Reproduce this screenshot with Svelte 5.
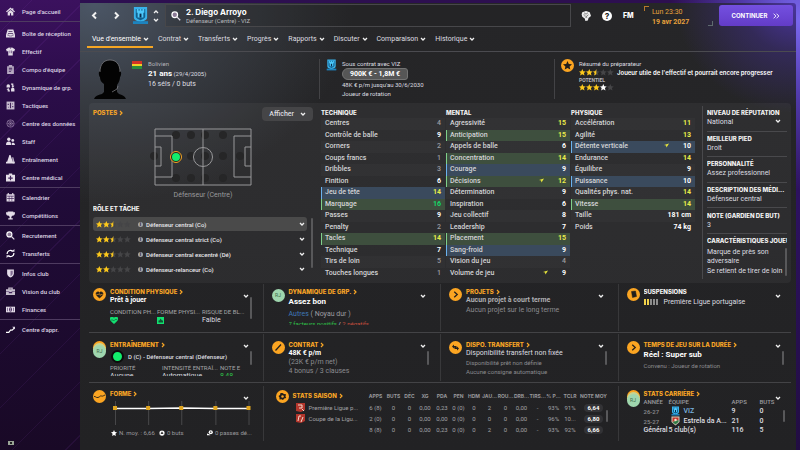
<script>
  const nav = [
    [['home', "Page d'accueil"]],
    [
      ['inbox', 'Boîte de réception'],
      ['shirt', 'Effectif'],
      ['clip', "Compo d'équipe"],
      ['dyn', 'Dynamique de grp.'],
      ['tact', 'Tactiques'],
      ['data', 'Centre des données'],
      ['staff', 'Staff'],
      ['cones', 'Entraînement'],
      ['med', 'Centre médical']
    ],
    [['cal', 'Calendrier'], ['cup', 'Compétitions']],
    [['search', 'Recrutement'], ['swap', 'Transferts']],
    [['shield', 'Infos club'], ['case', 'Vision du club'], ['cash', 'Finances']],
    [['growth', "Centre d'appr."]]
  ];
  const tabs = ["Vue d'ensemble", 'Contrat', 'Transferts', 'Progrès', 'Rapports', 'Discuter', 'Comparaison', 'Historique'];
  const roles = [
    [2.5, 'Défenseur central (Co)'],
    [2.5, 'Défenseur central strict (Co)'],
    [2.5, 'Défenseur central excentré (Dé)'],
    [2, 'Défenseur-relanceur (Co)']
  ];
  // [name, value, highlight, rising]
  const attributes = [
    ['TECHNIQUE', [
      ['Centres', 4], ['Contrôle de balle', 9], ['Corners', 2], ['Coups francs', 1], ['Dribbles', 3],
      ['Finition', 6], ['Jeu de tête', 14, 'blue'], ['Marquage', 16, 'green'], ['Passes', 9], ['Penalty', 2],
      ['Tacles', 14, 'green'], ['Technique', 7], ['Tirs de loin', 5], ['Touches longues', 1]
    ]],
    ['MENTAL', [
      ['Agressivité', 15], ['Anticipation', 15, 'green'], ['Appels de balle', 6], ['Concentration', 14, 'green'],
      ['Courage', 9, 'blue'], ['Décisions', 12, 'green', true], ['Détermination', 9], ['Inspiration', 6],
      ['Jeu collectif', 8], ['Leadership', 7], ['Placement', 15, 'green'], ['Sang-froid', 9, 'blue'],
      ['Vision du jeu', 4], ['Volume de jeu', 9, '', true]
    ]],
    ['PHYSIQUE', [
      ['Accélération', 11], ['Agilité', 13], ['Détente verticale', 10, 'blue', true], ['Endurance', 14],
      ['Équilibre', 9], ['Puissance', 10, 'blue'], ['Qualités phys. nat.', 14], ['Vitesse', 14, 'green'],
      ['Taille', '181 cm'], ['Poids', '74 kg']
    ]]
  ];
  const facts = [
    ['NIVEAU DE RÉPUTATION', 'National'],
    ['MEILLEUR PIED', 'Droit'],
    ['PERSONNALITÉ', 'Assez professionnel'],
    ['DESCRIPTION DES MÉDI...', 'Défenseur central'],
    ['NOTE (GARDIEN DE BUT)', '3']
  ];
  const seasonHead = ['APPS', 'BUTS', 'DÉC', 'XG', 'PDA', 'PEN', 'HDM', 'JAU...', 'ROU...', 'DRB...', 'TIRS...', '% P...', 'TCLR', 'NOTE MOY'];
  const seasonWidths = [18, 18, 14, 17, 17, 16, 15, 16, 16, 16, 16, 16, 17, 30];
  const season = [
    ['Première Ligue p...', '6 (8)', '0', '0', '0,00', '0,23', '0 (0)', '0', '2', '0', '0,00', '-', '93%', '91%', '6,64'],
    ['Coupe de la Ligu...', '2 (0)', '0', '0', '0,00', '0,00', '0 (0)', '0', '0', '0', '0,00', '-', '96%', '10...', '6,80'],
    ['', '8 (8)', '0', '0', '0,00', '0,23', '0 (0)', '0', '2', '0', '0,00', '-', '93%', '92%', '6,66']
  ];
  const dots = [[22, 7], [37, 7], [51, 7], [69, 7], [0, 28], [37, 28], [51, 28], [69, 28], [86, 28], [22, 50], [37, 50], [51, 50], [69, 50]];

  function level(v) {
    if (typeof v === 'string') return 'mid';
    if (v >= 16) return 'top';
    if (v >= 11) return 'high';
    return v >= 6 ? 'mid' : 'low';
  }
</script>

{#snippet chev(dir = 'down')}
  <svg class="chev {dir}" viewBox="0 0 6 6" aria-hidden="true"><path d="M1 2l2 2 2-2" /></svg>
{/snippet}

{#snippet stars(full, white = 0)}
  <svg class="stars" viewBox="0 0 35 7" role="img" aria-label="{full + white} étoiles sur 5">
    {#each [0, 1, 2, 3, 4] as i}
      <g transform="translate({i * 7} 0)">
        <path
          fill={i + 1 <= full ? '#fcc81c' : i + 1 <= full + white ? '#fff' : '#454547'}
          d="M3.3 0l1 2.3 2.4.2-1.8 1.6.6 2.5-2.2-1.3-2.2 1.3.6-2.5L0 2.500 2.300 2.300z" />
        {#if full > i && full < i + 1}
          <path fill="#fcc81c" d="M3.300 0v5.300L1.100 6.600l.6-2.500L0 2.500 2.300 2.300z" />
        {/if}
      </g>
    {/each}
  </svg>
{/snippet}

{#snippet crest()}
  <svg class="crest" viewBox="0 0 18 20" aria-hidden="true">
    <path fill="#39b2ea" d="M2 1h14v11c0 3-4 4-7 5-3-1-7-2-7-5z" />
    <path fill="#12618f" d="M4 3h10v8c0 2-3 3-5 4-2-1-5-2-5-4z" />
    <path fill="#4cc8fa" d="M5 3h2v2h1V3h2v2h1V3h2v4h-1v5H6V7H5z" />
    <path fill="#0c2d4c" d="M8 8h2v4H8z" />
    <path fill="#1d83be" d="M1 16h16v3H1z" />
  </svg>
{/snippet}

{#snippet icon(name)}
  <svg class="ico" viewBox="0 0 16 16" aria-hidden="true">
    {#if name === 'home'}
      <path d="M8 1L0 8l1.500 1.500L8 4l6.500 5.500L16 8l-3-2.600V2h-2v1.600zM3 9.500V15h4v-4h2v4h4V9.500L8 5.500z" />
    {:else if name === 'inbox'}
      <path d="M3 1h10l3 9v5H0v-5z" /><path class="cut" d="M4.500 4h7v1.500h-7zM3.500 7h9v1.500h-9zM2 10h3l1 2h4l1-2h3v1h-2.400l-1 2H5.400l-1-2H2z" />
    {:else if name === 'shirt'}
      <path d="M5 1h6l5 3-1.500 4L12 7v8H4V7L1.500 8 0 4z" /><path class="cut" d="M6 1h4L8 3zM6.500 6h1v5h-1zM9 6h1v5H9z" />
    {:else if name === 'clip'}
      <path opacity=".75" d="M2 2h3V0h6v2h3v14H2z" /><path class="cut" d="M5 5h6v1.500H5zM5 8h6v1.500H5zM5 11h4v1.500H5z" />
    {:else if name === 'dyn'}
      <path d="M1 5a3 3 0 016 0v3H1zM9 11a3 3 0 016 0v4H9zM9 1h4v4h2l-3 3.500L9.500 5H11V3H9zM7 15H3v-3H1l3-3 2.500 3H5v1h2z" />
    {:else if name === 'tact'}
      <path opacity=".85" d="M1 1h14v14H1z" /><path class="cut" d="M7 3h2v10H7zM3 5h2v2H3zM11 9h2v2h-2zM4 10h1v2H4zM11 4h1v2h-1z" />
    {:else if name === 'data'}
      <g fill="none" stroke="#b49fc0"><circle cx="8" cy="8" r="6.500" /><circle cx="8" cy="8" r="3.500" stroke-dasharray="2 1" /><path d="M2 8h12M8 2v12M4 4l8 8M12 4l-8 8" stroke-width=".6" /></g>
    {:else if name === 'staff'}
      <circle cx="5" cy="4" r="3" /><circle cx="12" cy="6" r="2.500" /><path d="M0 14c0-5 2-6 5-6s4 2 4 6zM10 14c0-3 0-4 2-4s4 1 4 4z" />
    {:else if name === 'cones'}
      <path d="M6 0h2l4 12h2v3H0v-3h2z" /><path opacity=".8" d="M11 4h2l2 8h1v3h-4z" />
    {:else if name === 'med'}
      <path d="M5 3V1h6v2h5v12H0V3z" /><path class="cut" d="M7 5h2v3h3v2H9v3H7v-3H4V8h3z" />
    {:else if name === 'cal'}
      <path d="M1 2h2V0h2v2h6V0h2v2h2v13H1z" /><path class="cut" d="M2 5h12v1H2zM5 6h1v8H5zM10 6h1v8h-1zM2 9.500h12v1H2z" />
    {:else if name === 'cup'}
      <path d="M3 1h10v1h3c0 4-1 6-4 6l-2.500 2v3H12v2H4v-2h2.500v-3L4 8C1 8 0 6 0 2h3z" />
    {:else if name === 'search'}
      <circle cx="6" cy="6" r="4.500" fill="#8b7a96" stroke="#fff" stroke-width="2" /><path d="M9 10.500L10.500 9l5 5-1.500 1.500z" />
    {:else if name === 'swap'}
      <path fill="none" stroke="#fff" stroke-width="2.200" d="M2 9a6 6 0 0110-5M14 7a6 6 0 01-10 5" /><path d="M9 5h6V0zM7 11H1v5z" />
    {:else if name === 'shield'}
      <path d="M2 1h12v7c0 4-3 6-6 7-3-1-6-3-6-7z" /><path class="cut" d="M8 3h4v5c0 2-2 4-4 5z" opacity=".6" />
    {:else if name === 'case'}
      <path opacity=".85" d="M4 4V1h8v3h4v10H0V4zm2 0h4V3H6z" fill-rule="evenodd" /><path class="cut" d="M0 8h6v1h4V8h6v1h-5v2H5V9H0z" />
    {:else if name === 'cash'}
      <path d="M0 3h16v10H0z" /><ellipse class="cut" cx="8" cy="8" rx="2.500" ry="4" /><path class="cut" d="M2 5h1v6H2zM13 5h1v6h-1z" /><path d="M7.500 5h1v6h-1z" />
    {:else if name === 'growth'}
      <path fill="none" stroke="#fff" stroke-width="2" d="M0 13h5l3-4h3l4-4" /><path d="M11 3h5v5z" />
    {:else if name === 'ball'}
      <circle cx="8" cy="8" r="7" /><path class="dark" d="M8 5l3 2-1 3.500H6L5 7zM7 1h2v2H7zM1.500 9l2 .5L4 12zM14.500 9l-2 .5-.5 2.500z" />
    {:else if name === 'boot'}
      <circle cx="10" cy="6" r="5.500" /><path class="dark" d="M10 3.500l2 1.500-.7 2.500H8.700L8 5z" /><path d="M0 9l6 2 3 3H0z" />
    {:else if name === 'star'}
      <path d="M8 0l2.400 5.400 5.600.6-4.200 3.900L13 16l-5-3-5 3 1.200-6.100L0 6l5.600-.6z" />
    {/if}
  </svg>
{/snippet}

{#snippet badge(kind)}
  <svg class="badge" viewBox="0 0 26 26" aria-hidden="true">
    <circle cx="13" cy="13" r="13" fill="#fba522" />
    <g fill="#221f1c" stroke="#221f1c">
      {#if kind === 'heart'}
        <path d="M13 20C9 17 6 14 6 11a3.800 3.800 0 017-1.500A3.800 3.800 0 0120 11c0 3-3 6-7 9z" /><path d="M7 13h4l1.500-2 2 4 1-2H19" fill="none" stroke="#fba522" stroke-width="1.200" />
      {:else if kind === 'star'}
        <path stroke="none" d="M13 4l2.600 6 6.400.6-4.800 4.300L18.600 21 13 17.800 7.400 21l1.400-6.100L4 10.600l6.400-.6z" />
      {:else if kind === 'arrow'}
        <path d="M10.500 7.500l6 5.500-6 5.500" fill="none" stroke-width="2.500" />
      {:else if kind === 'pen'}
        <path d="M7 19l11-12" stroke-width="2.500" />
      {:else if kind === 'card'}
        <path d="M9 7l8-1 2 11-8 2z" />
      {:else if kind === 'swap'}
        <path d="M6 11l4-4v3h5v3h-5v2zM20 15l-4 4v-3h-5v-3h5v-2z" stroke="none" />
      {:else if kind === 'wave'}
        <path d="M2 13c3-1 4 3 8 2s4-4 7-3 4-1 7-2" fill="none" stroke-width="1.800" />
      {:else if kind === 'ball'}
        <path stroke="none" d="M13 6l3 2 4 .5-1 4.500 1.500 3-4 1-2.500 3-3-1.500-4 .5v-4L5 12l3-2 1-4z" /><circle cx="13" cy="13" r="2.500" fill="#fba522" stroke="none" />
      {/if}
    </g>
  </svg>
{/snippet}

{#snippet avatar(stacked)}
  <span class="avatar" class:stacked>RJ</span>
{/snippet}

{#snippet title(text)}
  <h2 class="title"><a href="#top">{text}<svg viewBox="0 0 4 6" aria-hidden="true"><path d="M1 1l2 2-2 2" /></svg></a></h2>
{/snippet}

{#snippet more()}
  <button class="more" aria-label="Afficher plus">{@render chev()}</button>
{/snippet}

<div class="app" id="top">
  <nav class="side" aria-label="Menu principal">
    {#each nav as group}
      <ul>
        {#each group as [name, label]}
          <li><a href="#top">{@render icon(name)}{label}</a></li>
        {/each}
      </ul>
    {/each}
    <button class="keyboard" aria-label="Raccourcis"><i></i></button>
  </nav>

  <main>
    <header>
      <button class="step" aria-label="Précédent">{@render chev('left')}</button>
      <button class="step" aria-label="Suivant">{@render chev('right')}</button>
      {@render crest()}
      <div class="updown">
        <button aria-label="Joueur précédent">{@render chev('up')}</button>
        <button aria-label="Joueur suivant">{@render chev()}</button>
      </div>
      <div class="search">
        {@render icon('search')}
        <div>
          <h1>2. Diego Arroyo</h1>
          <p>Défenseur (Centre) - VIZ</p>
        </div>
        <input type="search" aria-label="Rechercher" />
      </div>
      <button class="tool" aria-label="Conseils">
        <svg viewBox="0 0 16 16"><path fill="#eee" d="M2 2l6-2 6 2 2 6-4 3-1 4-4 1-1-4-4-3-1-4z" /><path fill="none" stroke="#444" d="M5 3l3 2 3-2M4 6l3 1M12 6L9 8v3M6 9l2 1" /></svg>
      </button>
      <button class="tool help" aria-label="Aide">?</button>
      <button class="tool fm">FM</button>
      <div class="date"><span>Lun 23:30</span><b>19 avr 2027</b></div>
      <button class="go">CONTINUER
        <svg viewBox="0 0 12 10" aria-hidden="true"><path d="M1 1l4 4-4 4M6 1l4 4-4 4" /></svg>
      </button>
    </header>

    <nav class="tabs" aria-label="Sections du joueur">
      {#each tabs as tab, i}
        <a href="#top" class:on={i === 0}>{tab}{@render chev()}</a>
      {/each}
    </nav>

    <section class="intro">
      <div class="who">
        <svg class="portrait" viewBox="0 0 32 40" aria-hidden="true">
          <path d="M0 40c1-3 4-4 8-5l2-2v-8c-3-2-4-4-4-7-1 0-2-6 0-6C6 5 10 1 16 1s10 4 10 11c2 0 1 6 0 6 0 3-1 5-3 8v7l2 2c3 1 6 2 7 5z" />
          <path class="rim" d="M6 13C6 5 10 1 16 1s10 4 10 12M24 27l-1 3-5 3" />
        </svg>
        <svg class="flag" viewBox="0 0 10 8" role="img" aria-label="Bolivie"><path fill="#d33327" d="M0 0h10v3H0z" /><path fill="#f0cf28" d="M0 3h10v2H0z" /><path fill="#2a8b3d" d="M0 5h10v3H0z" /></svg>
        <div>
          <p class="soft">Bolivien</p>
          <p class="age"><b>21 ans</b> (29/4/2005)</p>
          <p class="caps">16 séls / 0 buts</p>
        </div>
      </div>
      <div class="deal">
        {@render crest()}
        <div>
          <p>Sous contrat avec VIZ</p>
          <button class="value">900K € - 1,8M €</button>
          <p>48K € p/m jusqu'au 30/6/2030</p>
          <p>Joueur de rotation</p>
        </div>
      </div>
      <div class="report">
        {@render badge('star')}
        <div>
          <p>Résumé du préparateur</p>
          <p class="verdict">{@render stars(2.5)}<b>Joueur utile de l'effectif et pourrait encore progresser</b></p>
          <p class="tiny">POTENTIEL</p>
          {@render stars(3, 1)}
        </div>
      </div>
    </section>

    <section class="panel">
      <div class="positions">
        <div class="bar">{@render title('POSTES')}<button class="show" aria-haspopup="menu">Afficher {@render chev()}</button></div>
        <svg class="pitch" viewBox="0 0 98 58" role="img" aria-label="Position sur le terrain">
          {#each dots as [x, y]}<circle class="spot" cx={x} cy={y} r="4" />{/each}
          <path class="lines" d="M1 1h96v56H1zM49 1v56M1 8h17v41H1M1 19h6v19H1M97 8H80v41h17M97 19h-6v19h6" />
          <circle class="lines" cx="49" cy="29" r="9.500" />
          <circle cx="22" cy="29" r="5.500" fill="#222" stroke="#f5a623" />
          <circle cx="22" cy="29" r="4" fill="#12ee6c" />
        </svg>
        <p class="caption">Défenseur (Centre)</p>
        <h2 class="plain">RÔLE ET TÂCHE</h2>
        <div class="roles">
          <ul>
            {#each roles as [score, label], i}
              <li><button class:on={i === 0}>{@render stars(score)}<i class="info">i</i><span>{label}</span>{@render chev()}</button></li>
            {/each}
          </ul>
          <i class="thumb"></i>
        </div>
      </div>

      <div class="attrs">
        {#each attributes as [heading, rows]}
          <table>
            <thead><tr><th colspan="2">{heading}</th></tr></thead>
            <tbody>
              {#each rows as [name, value, tone, rising]}
                <tr class={tone}>
                  <td>{name}</td>
                  <td class="num {level(value)}">
                    {#if rising}<svg viewBox="0 0 10 10" role="img" aria-label="En hausse"><path d="M10 1L0 4l4 1 1 4z" /></svg>{/if}{value}
                  </td>
                </tr>
              {/each}
            </tbody>
          </table>
        {/each}
      </div>

      <aside>
        {#each facts as [label, value], i}
          <div class="fact">
            <h2 class="plain">{label}</h2>
            <p>{value}</p>
            {#if i === 0}{@render more()}{/if}
          </div>
        {/each}
        <div class="traits">
          <h2 class="plain">CARACTÉRISTIQUES JOUEUR</h2>
          <ul><li>Marque de près son adversaire</li><li>Se retient de tirer de loin</li></ul>
          <i class="thumb"></i>
        </div>
      </aside>
    </section>

    <section class="cards">
      <article>
        {@render badge('heart')}
        <div class="body">
          {@render title('CONDITION PHYSIQUE')}
          <p class="strong">Prêt à jouer</p>
          <dl class="trio">
            <div><dt>CONDITION PH...</dt><dd><svg viewBox="0 0 16 14" role="img" aria-label="Bonne"><path fill="#12e070" d="M8 14C3 10 0 7 0 4a4 4 0 018-1.500A4 4 0 0116 4c0 3-3 6-8 10z" /><path d="M2 6h4l1.500 2L10 5h4" fill="none" stroke="#174" stroke-width="1.500" /></svg></dd></div>
            <div><dt>FORME PHYSI...</dt><dd><svg viewBox="0 0 16 14" role="img" aria-label="Bonne"><path fill="#12e070" d="M0 0h14v14H0z" /><path fill="#153" d="M7 3l3 4h2v4H3V7h2z" /></svg></dd></div>
            <div><dt>RISQUE DE BL...</dt><dd>Faible</dd></div>
          </dl>
        </div>
        {@render more()}<i class="thumb"></i>
      </article>
      <article>
        {@render avatar(false)}
        <div class="body">
          {@render title('DYNAMIQUE DE GRP.')}
          <p class="big">Assez bon</p>
          <p class="group"><a href="#top">Autres</a> ( Noyau dur )</p>
          <p class="clipped"><a class="pos" href="#top">7 facteurs positifs</a> / <a class="neg" href="#top">2 négatifs</a></p>
        </div>
        {@render more()}
      </article>
      <article>
        {@render badge('arrow')}
        <div class="body">
          {@render title('PROJETS')}
          <p class="grey"><b>Aucun projet à court terme</b></p>
          <p class="dim wide">Aucun projet sur le long terme</p>
        </div>
        {@render more()}
      </article>
      <article>
        {@render badge('card')}
        <div class="body">
          <h2 class="plain">SUSPENSIONS</h2>
          <p class="ban"><svg viewBox="0 0 15 6" role="img" aria-label="2 cartons sur 5"><path fill="#f2d24a" d="M0 0h2v6H0zM3 0h2v6H3z" /><path fill="#8d8d8d" d="M6 0h2v6H6zM9 0h2v6H9zM12 0h2v6h-2z" /></svg>Première Ligue portugaise</p>
        </div>
        {@render more()}
      </article>
    </section>

    <section class="cards second">
      <article>
        {@render avatar(true)}
        <div class="body">
          {@render title('ENTRAÎNEMENT')}
          <p class="post"><i></i>D (C) - Défenseur central (Défenseur)</p>
          <dl class="trio low">
            <div><dt>PRIORITÉ</dt><dd>Aucune</dd></div>
            <div><dt>INTENSITÉ ENTRAÎ...</dt><dd>Automatique</dd></div>
            <div><dt>NOTE E</dt><dd class="pos">8,48</dd></div>
          </dl>
        </div>
        {@render more()}<i class="thumb"></i>
      </article>
      <article>
        {@render badge('pen')}
        <div class="body">
          {@render title('CONTRAT')}
          <p class="strong">48K € p/m</p>
          <p class="dim">(23K € p/m net)</p>
          <p class="dim">4 bonus / 3 clauses</p>
        </div>
        {@render more()}<i class="thumb"></i>
      </article>
      <article>
        {@render badge('swap')}
        <div class="body">
          {@render title('DISPO. TRANSFERT')}
          <p>Disponibilité transfert non fixée</p>
          <p class="dim small">Disponibilité prêt non définie</p>
          <p class="dim small">Aucune consigne automatique</p>
        </div>
        {@render more()}<i class="thumb"></i>
      </article>
      <article>
        {@render badge('arrow')}
        <div class="body">
          {@render title('TEMPS DE JEU SUR LA DURÉE')}
          <p class="big">Réel : Super sub</p>
          <p class="dim small wide">Convenu : Joueur de rotation</p>
        </div>
        {@render more()}<i class="thumb"></i>
      </article>
    </section>

    <section class="cards bottom">
      <article>
        {@render badge('wave')}
        <div class="body">
          {@render title('FORME')}
          <svg class="chart" viewBox="0 0 140 24" preserveAspectRatio="none" role="img" aria-label="Notes des cinq derniers matchs">
            <path stroke="#48484a" d="M5.500 0v24M38.500 0v24M71.500 0v24M105.500 0v24M138.500 0v24" />
            <path fill="none" stroke="#fff" stroke-width="1.500" d="M5 7.500h33l33-.5 34 .5h33" />
            <path fill="#e0a520" d="M3 5h4v4H3zM36 5h4v4h-4zM69 5h4v4h-4zM103 5h4v4h-4zM136 5h4v4h-4z" />
          </svg>
          <p class="legend"><span>{@render icon('star')}N. moy. : 6,66</span><span>{@render icon('ball')}0 buts</span><span>{@render icon('boot')}0 passes dé...</span></p>
        </div>
        {@render more()}
      </article>

      <article>
        {@render badge('ball')}
        <div class="body">
          <table class="season">
            <colgroup><col />{#each seasonWidths as w}<col style="width:{w}px" />{/each}</colgroup>
            <thead>
              <tr><th scope="col">{@render title('STATS SAISON')}</th>{#each seasonHead as h}<th scope="col">{h}</th>{/each}</tr>
            </thead>
            <tbody>
              {#each season as row, r}
                <tr>
                  {#each row as cell, c}
                    <td>
                      {#if c === 0 && cell}
                        <svg class="comp" viewBox="0 0 9 9" aria-hidden="true"><path fill="#b3362c" d="M0 0h9v7L5 9 0 8z" /><path fill="none" stroke="#f3d9cc" d={r ? 'M2 7l1-5h2M5 8l2-5' : 'M2 2h4v3H3M6 6l2 2'} /></svg>{cell}
                      {:else if c === 14}<span class="note">{cell}</span>
                      {:else}{cell}{/if}
                    </td>
                  {/each}
                </tr>
              {/each}
            </tbody>
          </table>
        </div>
        <i class="thumb"></i>
      </article>

      <article>
        {@render avatar(true)}
        <div class="body">
          {@render title('STATS CARRIÈRE')}
          <table class="career">
            <thead><tr><th>ANNÉE</th><th>ÉQUIPE</th><th>APPS</th><th>BUTS</th></tr></thead>
            <tbody>
              <tr><td class="dim">26-27</td><td><span>{@render crest()}<a href="#top">VIZ</a></span></td><td>9</td><td>0</td></tr>
              <tr><td class="dim">25-27</td><td><span>
                <svg class="crest" viewBox="0 0 18 20" aria-hidden="true"><path fill="#d9cdbb" d="M1 1h16v11l-8 7-8-7z" /><path fill="#c6352b" d="M3 3h12v5L3 12z" /><path fill="#2f7a45" d="M15 8v4l-6 5-6-5z" /><circle cx="9" cy="8" r="2.500" fill="#f3e9d0" /></svg>Estrela da A...</span></td><td>21</td><td>0</td></tr>
            </tbody>
            <tfoot><tr><td>Général</td><td>5 club(s)</td><td>116</td><td>5</td></tr></tfoot>
          </table>
        </div>
        {@render more()}<i class="thumb"></i>
      </article>
    </section>
  </main>
</div>

<style>
  :global(body) { background: #1b0a30; }
  .app {
    display: grid; grid-template-columns: 80px minmax(0, 1fr); min-height: 100vh;
    background:
      radial-gradient(ellipse 130px 170px at 100% 20px, #7a68f0 0, #5a45c0cc 45%, transparent 100%),
      linear-gradient(to bottom, #2d0f50 0, #2d1260 45%, #220d42 100%);
    color: #dedee0; font: 7px/9px Roboto, "Liberation Sans", sans-serif;
  }
  .app *, .app { box-sizing: border-box; }
  h1, h2, p, ul, dl, dd { margin: 0; padding: 0; list-style: none; }
  a { color: inherit; text-decoration: none; }
  i { font-style: normal; }
  button { margin: 0; padding: 0; border: 0; background: none; color: inherit; font: inherit; cursor: pointer; }
  svg { display: block; flex: none; }
  table { border-collapse: separate; border-spacing: 0; }
  th, td { padding: 0; text-align: left; }
  .chev { width: 6px; height: 6px; fill: none; stroke: #f0f0f0; stroke-width: 1.300; }
  .up { transform: rotate(180deg); }
  .left { transform: rotate(90deg); }
  .right { transform: rotate(-90deg); }
  .ico { width: 9px; height: 9px; fill: #e4dde8; }
  .cut { fill: #42255c; }
  .dark { fill: #222; }
  .stars { width: 35px; height: 7px; }
  .badge { width: 13px; height: 13px; }
  .thumb { position: absolute; right: 11px; top: 13px; width: 2px; height: 22px; border-radius: 1px; background: #58585a; }

  .side {
    display: flex; flex-direction: column; padding-top: 2px; color: #dcd4e4; font-size: 6px; font-weight: 500;
    background:
      repeating-linear-gradient(135deg, transparent 0 22px, #8a3fc01c 22px 23px, transparent 23px 38px),
      linear-gradient(to bottom, #3b115e 0, #2b0d49 90px, #200b38 200px, #190926 100%);
  }
  .side ul { padding-bottom: 1px; }
  .side ul + ul { border-top: 1px solid #4e3b60; }
  .side ul:nth-child(2) { padding-top: 2px; }
  .side li a { display: flex; align-items: center; gap: 7px; height: 18px; padding-left: 6px; white-space: nowrap; }
  .keyboard { margin: auto 0 6px 8px; width: 6px; height: 4px; background: #9aa596; }
  .keyboard i { display: block; width: 2px; height: 2px; margin: auto; background: #222; }

  main {
    margin: 3px 4px 0 0; padding-bottom: 8px; border-radius: 0 3px 0 0;
    background:
      radial-gradient(ellipse 120px 110px at 100% 0, #4b35a0 0, #3a2c70aa 45%, transparent 100%),
      radial-gradient(ellipse 260px 200px at 2% 0, #4b5666 0, #3d424acc 45%, transparent 100%),
      linear-gradient(to bottom, #262628, #222224);
  }
  header { display: flex; align-items: center; height: 25px; padding: 0 3px 0 8px; }
  header > .step { width: 12px; margin-right: 10px; display: flex; justify-content: center; }
  .step .chev { width: 9px; height: 9px; }
  header > .crest { width: 17px; height: 19px; margin: 0 4px 0 0; }
  .updown { display: grid; gap: 2px; margin-right: 6px; }
  .search { flex: 1; display: flex; align-items: center; height: 23px; margin-right: 10px; padding-left: 5px; border: 1px solid #47474a; background: #1e1e2030; }
  .search .ico { width: 10px; height: 10px; margin-right: 5px; }
  .search h1 { font: 700 8px/10px Inter, sans-serif; color: #fff; white-space: nowrap; }
  .search p { font-size: 6px; line-height: 8px; color: #b9b9bd; white-space: nowrap; }
  .search input { flex: 1; min-width: 0; height: 20px; border: 0; background: none; color: #fff; outline: none; appearance: none; }
  .tool { width: 10px; height: 10px; margin-right: 11px; }
  .tool svg { width: 10px; height: 10px; }
  .help { border-radius: 50%; background: #fff; color: #222; font: 800 8px/10px Inter, sans-serif; }
  .fm { color: #fff; font: 800 7px/10px Inter, sans-serif; }
  .date { position: relative; display: grid; width: 69px; height: 20px; padding: 1px 0 0 8px; margin-right: 6px; color: #e8a23c; font-size: 7px; line-height: 10px; }
  .date::before, .date::after { content: ""; position: absolute; width: 4px; height: 4px; }
  .date::before { left: 0; top: 0; border: solid #b9792a; border-width: 1px 0 0 1px; }
  .date::after { right: 0; bottom: 0; border: solid #5e6a6e; border-width: 0 1px 1px 0; }
  .go { display: flex; align-items: center; justify-content: center; gap: 6px; width: 74px; height: 21px; border-radius: 3px; background: linear-gradient(#7450e0, #633cc8); color: #fff; font: 700 6px/8px Inter, sans-serif; }
  .go svg { width: 7px; height: 6px; fill: none; stroke: #fff; stroke-width: 1.500; }

  .tabs { display: flex; height: 24px; padding-left: 7px; border-bottom: 1px solid #4b4b50; }
  .tabs a { display: flex; align-items: center; gap: 2px; height: 20px; padding: 4px 4px 0 5px; border-bottom: 2px solid transparent; white-space: nowrap; }
  .tabs .on { border-color: #f5a623; color: #fff; }

  .intro { display: grid; grid-template-columns: 225px 235px minmax(0, 1fr); padding: 7px 4px 4px 14px; }
  .intro > div { display: flex; gap: 6px; height: 40px; }
  .intro > div + div { border-left: 1px solid #434346; padding-left: 6px; }
  .intro p { white-space: nowrap; font-size: 6px; }
  .intro .report, .intro .deal { gap: 5px; }
  .portrait { width: 32px; height: 40px; fill: #030303; }
  .rim { fill: none; stroke: #85858a; stroke-width: .7; }
  .flag { width: 10px; height: 8px; margin-top: 2px; }
  .soft { color: #b5b5ba; }
  .intro .age { line-height: 11px; }
  .age b { font-size: 8px; color: #fff; }
  .intro .caps { font-size: 7px; line-height: 10px; }
  .deal .crest { width: 11px; height: 12px; }
  .value { display: block; height: 12px; padding: 0 7px; border: 1px solid #737373; border-radius: 6px 3px 3px 6px; background: #565656; color: #fff; font: 700 7px/10px Roboto, sans-serif; }
  .verdict { display: flex; align-items: center; gap: 3px; color: #fff; }
  .verdict b { font-family: Inter, sans-serif; font-weight: 600; }
  .intro .tiny { font-size: 5px; line-height: 7px; font-weight: 700; color: #b5b5ba; }

  .panel { display: flex; height: 180px; margin: 0 5px 0 9px; padding-left: 4px; border-radius: 4px; background: #ffffff0b; }
  .positions { display: flex; flex-direction: column; flex: 0 0 228px; padding: 4px 8px 0 0; }
  .bar { display: flex; align-items: flex-start; justify-content: space-between; }
  .title, .plain, .attrs th { font: 800 6px/8px Inter, sans-serif; white-space: nowrap; }
  .title { color: #f9a626; }
  .title a { display: inline-flex; align-items: center; gap: 2px; }
  .title svg { width: 4px; height: 6px; fill: none; stroke: #f9a626; stroke-width: 1.200; }
  .plain { color: #f2f2f2; overflow-x: clip; overflow-y: visible; }
  .bar .title { margin-top: 2px; }
  .show { display: flex; align-items: center; gap: 6px; height: 14px; padding: 0 7px; border-radius: 4px; background: #454547; font-weight: 500; }
  .pitch { width: 98px; height: 58px; margin: 7px auto 5px 61px; overflow: visible; }
  .lines { fill: none; stroke: #98989a; }
  .spot { fill: #262627; }
  .caption { text-align: center; color: #9a9a9c; }
  .positions > .plain { margin: 5px 0 4px; }
  .roles { display: flex; gap: 4px; }
  .roles ul { flex: 1; display: grid; gap: 1px; }
  .roles li button { display: flex; align-items: center; width: 100%; height: 14px; padding: 0 2px 0 3px; border-radius: 3px; text-align: left; font-size: 6px; color: #e8e8ea; font-weight: 500; }
  .roles .on { background: #4a4a4a; }
  .roles span { flex: 1; }
  .info { width: 5px; height: 5px; margin: 0 3px 0 7px; border-radius: 50%; background: #a5a5a8; color: #222; font: 700 5px/5px Roboto, sans-serif; text-align: center; }
  .roles .thumb { position: static; height: 50px; margin-top: 1px; }

  .attrs { flex: 1; min-width: 0; display: grid; grid-template-columns: repeat(3, minmax(0, 1fr)); gap: 1px; align-items: start; padding-top: 5px; }
  .attrs table { width: 100%; height: 171px; }
  .attrs table:last-child { height: 125px; }
  .attrs thead tr { height: 10px; }
  .attrs th { color: #f2f2f2; }
  .attrs td { padding-left: 4px; line-height: 9px; font-weight: 500; color: #d4d4d6; }
  .attrs td:first-child { padding-left: 3px; border-left: 1px solid transparent; white-space: nowrap; }
  .attrs tbody tr:nth-child(odd) td { background: #ffffff05; }
  .attrs tbody tr.green:nth-child(n) td { background: #3e4f3e; border-color: #7fd08a; }
  .attrs tbody tr.blue:nth-child(n) td { background: #3a4a5d; border-color: #6bb2ee; }
  .attrs .num { padding-right: 4px; text-align: right; white-space: nowrap; font-weight: 700; }
  .num svg { display: inline-block; width: 5px; height: 5px; margin-right: 14px; fill: #e8e63c; }
  .attrs .top { color: #16d868; }
  .attrs .high { color: #e9ec4a; }
  .attrs .mid { color: #fff; }
  .attrs .low { color: #9c9ca0; font-weight: 500; }

  aside { display: flex; flex-direction: column; flex: 0 0 89px; min-width: 0; margin: 3px 0 4px 7px; padding: 0 4px; border-left: 1px solid #49494c; }
  .fact { position: relative; flex: 1; display: flex; flex-direction: column; justify-content: center; border-bottom: 1px solid #49494c; }
  .fact p { line-height: 10px; }
  .fact .more { right: 6px; top: 12px; }
  .traits { position: relative; height: 45px; padding-top: 3px; }
  .traits .plain { margin-bottom: 3px; }
  .traits li { line-height: 9px; margin-bottom: 1px; white-space: nowrap; }
  .traits li:first-child { padding-right: 10px; white-space: normal; }
  .traits .thumb { right: 0; height: 28px; top: 14px; }

  .cards {
    display: grid; grid-template-columns: repeat(4, minmax(0, 1fr)); height: 50px; margin: 0 1px 0 5px; padding: 1px 0 2px;
    background: linear-gradient(#434346, #434346) center bottom / calc(100% - 8px) 1px no-repeat;
  }
  .cards article { position: relative; display: flex; gap: 4px; padding: 4px 0 0 8px; min-width: 0; overflow: hidden; }
  .cards article + article { border-left: 1px solid #38383a; }
  .body { flex: 1; min-width: 0; white-space: nowrap; }
  .more { position: absolute; right: 14px; top: 9px; }
  .strong, .big { font-weight: 700; color: #fff; }
  .big { font-size: 8px; line-height: 11px; }
  .grey { color: #aeaeb2; }
  .dim { color: #8b8b8f; }
  .small { font-size: 6px; }
  .wide { line-height: 11px; }
  .avatar { flex: none; width: 13px; height: 13px; margin-top: 1px; border-radius: 50%; background: #9fd6ae; color: #3f6b4b; font-size: 5px; line-height: 13px; text-align: center; }
  .stacked { margin-top: 4px; box-shadow: 0 -2px 0 #c5d492, 0 -4px 0 #fba522; }
  .trio { display: grid; grid-template-columns: 47px 45px 43px; margin-top: 2px; }
  .trio dt { color: #a5a5a8; font-size: 6px; line-height: 9px; }
  .trio svg { width: 8px; height: 7px; margin-top: 1px; }
  .low { grid-template-columns: 52px 58px 24px; margin-top: 0; }
  .low dd { height: 4px; overflow: hidden; }
  .group { padding-top: 2px; line-height: 10px; color: #9c9ca0; }
  .group a { color: #3f78b8; }
  .clipped { height: 6px; overflow: hidden; font-size: 6px; }
  .pos { color: #2fc44a; }
  .neg { color: #c8503f; }
  .ban { display: flex; align-items: center; gap: 5px; line-height: 12px; }
  .ban svg { width: 15px; height: 6px; }
  .post { display: flex; align-items: center; gap: 4px; height: 14px; padding-left: 1px; font-size: 6px; font-weight: 500; }
  .post i { width: 13px; height: 13px; border: 2px solid #0d0d0d; border-radius: 50%; background: #12ee6c; }
  .second article { padding-top: 7px; }
  .second .thumb { top: 17px; height: 14px; }

  .bottom { grid-template-columns: minmax(0, 1fr) minmax(0, 2fr) minmax(0, 1fr); height: 60px; padding-top: 3px; background: none; }
  .bottom article { padding-top: 4px; }
  .bottom article + article { padding-left: 10px; }
  .bottom article:nth-child(2) { padding: 4px 9px 0 12px; }
  .bottom article:last-child { padding-left: 8px; }
  .chart { width: calc(100% - 12px); height: 24px; margin-top: 3px; }
  .legend { display: grid; grid-template-columns: 48px 48px 1fr; margin-top: 3px; padding-left: 1px; font-size: 6px; color: #9a9a9e; }
  .legend span { display: flex; align-items: center; gap: 2px; }
  .legend .ico { width: 6px; height: 6px; fill: #fff; }
  .season { width: 100%; table-layout: fixed; color: #a2a2a6; }
  .season th { height: 12px; text-align: center; font: 700 5px/8px Inter, sans-serif; color: #98989c; white-space: nowrap; }
  .season td { height: 11px; text-align: center; font-size: 6px; }
  .season th:first-child, .season td:first-child { text-align: left; }
  .comp { display: inline-block; width: 9px; height: 9px; margin: 0 4px 0 3px; vertical-align: middle; }
  .note { padding: 0 4px; border-radius: 4px; background: #333336; color: #fff; font-weight: 700; line-height: 8px; display: inline-block; }
  .career { width: 100%; table-layout: fixed; }
  .career th { font-size: 6px; line-height: 8px; font-weight: 500; color: #9a9a9e; }
  .career th:first-child { width: 25px; }
  .career th:nth-child(2) { width: 63px; }
  .career th:nth-child(3) { width: 28px; }
  .career td { line-height: 9px; font-weight: 500; }
  .career td.dim { font-size: 6px; }
  .career span { display: flex; align-items: center; gap: 4px; }
  .career span a { color: #7ab1de; }
  .career .crest { width: 9px; height: 10px; margin-left: 2px; }
  .bottom .thumb { top: 24px; height: 12px; right: 10px; }
</style>
